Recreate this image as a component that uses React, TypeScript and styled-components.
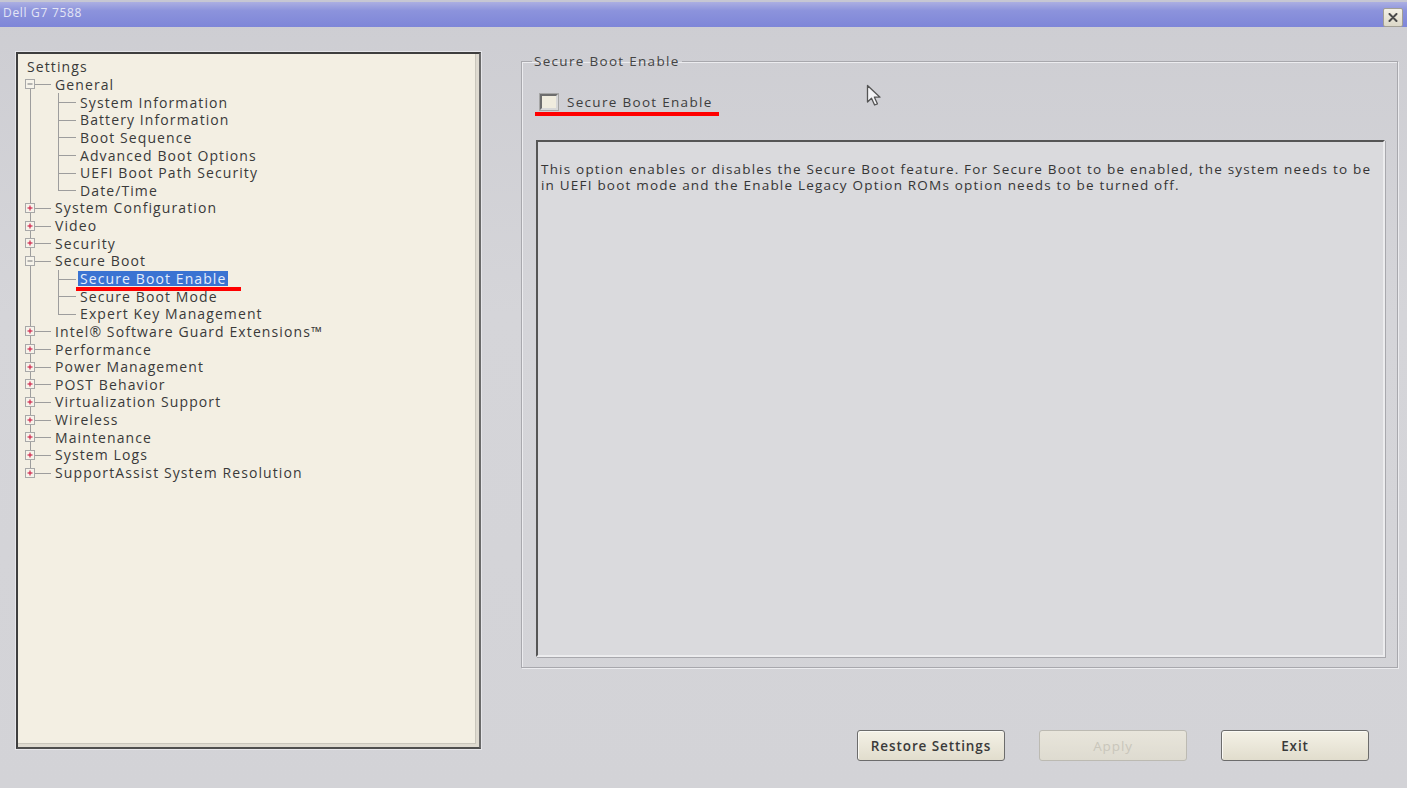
import React from "react";
import styled, { createGlobalStyle, css } from "styled-components";

const GlobalStyle = createGlobalStyle`
  html, body { margin: 0; padding: 0; width: 1407px; height: 788px; overflow: hidden; background: #d3d3d7; }
  #root { width: 1407px; height: 788px; }
  * { box-sizing: border-box; }
`;

const Window = styled.div`
  position: relative;
  width: 1407px;
  height: 788px;
  display: flex;
  flex-direction: column;
  background: linear-gradient(#cdcdd2, #d5d5d9 40%, #d3d3d7);
  font-family: "Open Sans", "DejaVu Sans", sans-serif;
  color: #3a3a3a;
  overflow: hidden;
`;

const TitleBar = styled.div`
  height: 27px;
  flex: none;
  display: flex;
  align-items: center;
  justify-content: space-between;
  padding: 0 4px 0 3px;
  border-top: 2px solid #c6c7d3;
  background: linear-gradient(#abafe2 0%, #8c93dc 35%, #7e86d8 100%);
`;

const TitleText = styled.span`
  font-size: 12px;
  letter-spacing: 0.7px;
  color: #e3e5f5;
  margin-top: -4px;
`;

const CloseButton = styled.div`
  width: 20px;
  height: 19px;
  margin-top: 6px;
  display: flex;
  align-items: center;
  justify-content: center;
  background: linear-gradient(#f3f0e5, #dcd8c8);
  border: 1px solid #a29f94;
  border-radius: 2px;
`;

const Body = styled.div`
  flex: 1;
  display: flex;
  gap: 40px;
  padding: 25px 0 0 16px;
`;

const TreePanel = styled.div`
  width: 465px;
  height: 697px;
  flex: none;
  padding: 4px 0 0 5px;
  background: #f3efe3;
  border: 2px solid;
  border-color: #3e3e3e #6a6a6a #4e4e4e #3e3e3e;
  box-shadow: 0 0 0 1px #e6e6ea, inset -3px -3px 0 #dedad0, inset -4px -4px 0 #c9c6bc;
  display: flex;
  flex-direction: column;
`;

const Row = styled.div`
  height: 17.65px;
  display: flex;
  align-items: center;
  font-size: 14px;
  letter-spacing: 1.1px;
  white-space: nowrap;
`;

type VLine = "full" | "top" | "bottom" | "none";

const Gutter = styled.span<{ $w: number; $x: number; $v: VLine; $h?: number }>`
  position: relative;
  flex: none;
  align-self: stretch;
  width: ${(p) => p.$w}px;
  &::before {
    content: "";
    position: absolute;
    left: ${(p) => p.$x}px;
    width: 1px;
    background: #9d9d9d;
    top: ${(p) => (p.$v === "bottom" ? "50%" : "0")};
    bottom: ${(p) => (p.$v === "top" ? "50%" : "0")};
    display: ${(p) => (p.$v === "none" ? "none" : "block")};
  }
  &::after {
    content: "";
    position: absolute;
    top: 50%;
    height: 1px;
    background: #9d9d9d;
    left: ${(p) => p.$x}px;
    width: ${(p) => p.$h ?? 0}px;
  }
`;

const Expander = styled.span`
  position: absolute;
  z-index: 1;
  left: 2px;
  top: 50%;
  margin-top: -5px;
  width: 10px;
  height: 10px;
  display: flex;
  background: #f6f3ea;
  border: 1px solid #a8a8a8;
`;

const Label = styled.span<{ $selected?: boolean; $root?: boolean }>`
  position: relative;
  display: inline-block;
  line-height: 15px;
  padding: 0 ${(p) => (p.$root ? "4px" : "2px")};
  ${(p) =>
    p.$selected &&
    css`
      background: #3a73d2;
      color: #e4edfc;
      &::after {
        content: "";
        position: absolute;
        left: -2px;
        width: 165px;
        top: 16px;
        height: 4px;
        background: #ff0000;
      }
    `}
`;

const RightColumn = styled.div`
  width: 877px;
  display: flex;
  flex-direction: column;
`;

const GroupBox = styled.fieldset`
  margin: 0;
  height: 616px;
  padding: 24px 12px 10px 14px;
  border: 1px solid #a8a8ad;
  box-shadow: inset 1px 1px 0 #ececef, 1px 1px 0 #ececef;
`;

const Legend = styled.legend`
  margin-left: -4px;
  padding: 0 2px;
  font-size: 13.5px;
  letter-spacing: 1.3px;
  line-height: 18px;
  color: #444;
`;

const CheckRow = styled.label`
  position: relative;
  display: flex;
  align-items: center;
  gap: 9px;
  height: 16px;
  margin-left: 4px;
  font-size: 13.5px;
  letter-spacing: 1.3px;
  color: #3d3d3d;
  &::after {
    content: "";
    position: absolute;
    left: -5px;
    width: 184px;
    top: 18px;
    height: 4px;
    background: #ff0000;
  }
`;

const CheckBox = styled.span`
  width: 18px;
  height: 16px;
  flex: none;
  background: #f0ecde;
  border: 2px solid;
  border-color: #6d6d6d #d8d8d8 #d8d8d8 #6d6d6d;
  box-shadow: 0 0 0 1px #a6a6a6;
`;

const Description = styled.div`
  height: 517px;
  margin-top: 30px;
  padding: 19px 3px;
  background: #dadadd;
  border: 2px solid;
  border-color: #555 #ececee #ececee #555;
  box-shadow: 1px 1px 0 #a8a8ad;
  font-size: 13.5px;
  letter-spacing: 1.2px;
  line-height: 16px;
  color: #353535;
  white-space: nowrap;
`;

const Line = styled.span`
  display: block;
`;

const ButtonBar = styled.div`
  display: flex;
  justify-content: flex-end;
  gap: 34px;
  margin-top: 62px;
  padding-right: 29px;
`;

const Button = styled.button<{ $disabled?: boolean }>`
  width: 148px;
  height: 31px;
  font-family: inherit;
  font-size: 13.5px;
  font-weight: 600;
  letter-spacing: 0.9px;
  border-radius: 3px;
  border: 1px solid #6c6c6c;
  background: linear-gradient(#f4f1e6, #e1ddcd);
  box-shadow: inset 1px 1px 0 #fbfaf5;
  color: #3a3a3a;
  ${(p) =>
    p.$disabled &&
    css`
      border-color: #bcbab2;
      background: linear-gradient(#e8e5db, #dedbd0);
      color: #c9c6bb;
      font-weight: 400;
      box-shadow: none;
    `}
`;

const Cursor = styled.svg`
  position: absolute;
  left: 866px;
  top: 84px;
`;

type Node = { label: string; children?: string[] };

const tree: Node[] = [
  {
    label: "General",
    children: [
      "System Information",
      "Battery Information",
      "Boot Sequence",
      "Advanced Boot Options",
      "UEFI Boot Path Security",
      "Date/Time",
    ],
  },
  { label: "System Configuration" },
  { label: "Video" },
  { label: "Security" },
  {
    label: "Secure Boot",
    children: ["Secure Boot Enable", "Secure Boot Mode", "Expert Key Management"],
  },
  { label: "Intel® Software Guard Extensions™" },
  { label: "Performance" },
  { label: "Power Management" },
  { label: "POST Behavior" },
  { label: "Virtualization Support" },
  { label: "Wireless" },
  { label: "Maintenance" },
  { label: "System Logs" },
  { label: "SupportAssist System Resolution" },
];

const ExpIcon = ({ open }: { open: boolean }) => (
  <Expander>
    <svg width="8" height="8" viewBox="0 0 8 8">
      <line x1="1.5" y1="4" x2="6.5" y2="4" stroke={open ? "#8a8a8a" : "#d0264a"} strokeWidth="1.2" />
      {!open && <line x1="4" y1="1.5" x2="4" y2="6.5" stroke="#d0264a" strokeWidth="1.2" />}
    </svg>
  </Expander>
);

export default function App() {
  const rows: React.ReactNode[] = [];
  tree.forEach((n, i) => {
    const v: VLine = i === 0 ? "bottom" : i === tree.length - 1 ? "top" : "full";
    rows.push(
      <Row key={n.label}>
        <Gutter $w={30} $x={7} $v={v} $h={21}>
          <ExpIcon open={!!n.children} />
        </Gutter>
        <Label>{n.label}</Label>
      </Row>
    );
    n.children?.forEach((c, j) => {
      rows.push(
        <Row key={c}>
          <Gutter $w={30} $x={7} $v="full" />
          <Gutter $w={25} $x={5} $v={j === n.children!.length - 1 ? "top" : "full"} $h={18} />
          <Label $selected={c === "Secure Boot Enable"}>{c}</Label>
        </Row>
      );
    });
  });

  return (
    <Window>
      <GlobalStyle />
      <TitleBar>
        <TitleText>Dell G7 7588</TitleText>
        <CloseButton>
          <svg width="10" height="9" viewBox="0 0 10 9">
            <path d="M1.5 1 L8.5 8 M8.5 1 L1.5 8" stroke="#4a4a4a" strokeWidth="2" strokeLinecap="round" />
          </svg>
        </CloseButton>
      </TitleBar>
      <Body>
        <TreePanel>
          <Row>
            <Label $root>Settings</Label>
          </Row>
          {rows}
        </TreePanel>
        <RightColumn>
          <GroupBox>
            <Legend>Secure Boot Enable</Legend>
            <CheckRow>
              <CheckBox />
              Secure Boot Enable
            </CheckRow>
            <Description>
              <Line>
                This option enables or disables the Secure Boot feature. For Secure Boot to be enabled, the system needs to be
              </Line>
              <Line>in UEFI boot mode and the Enable Legacy Option ROMs option needs to be turned off.</Line>
            </Description>
          </GroupBox>
          <ButtonBar>
            <Button>Restore Settings</Button>
            <Button $disabled>Apply</Button>
            <Button>Exit</Button>
          </ButtonBar>
        </RightColumn>
      </Body>
      <Cursor width="19" height="23" viewBox="0 0 19 23">
        <path d="M1.5 1.5 L1.5 18 L5.5 14.2 L8.6 21 L11.4 19.8 L8.4 13.2 L14 13.2 Z" fill="#f4f4f6" stroke="#555" strokeWidth="1.3" strokeLinejoin="round" />
      </Cursor>
    </Window>
  );
}
